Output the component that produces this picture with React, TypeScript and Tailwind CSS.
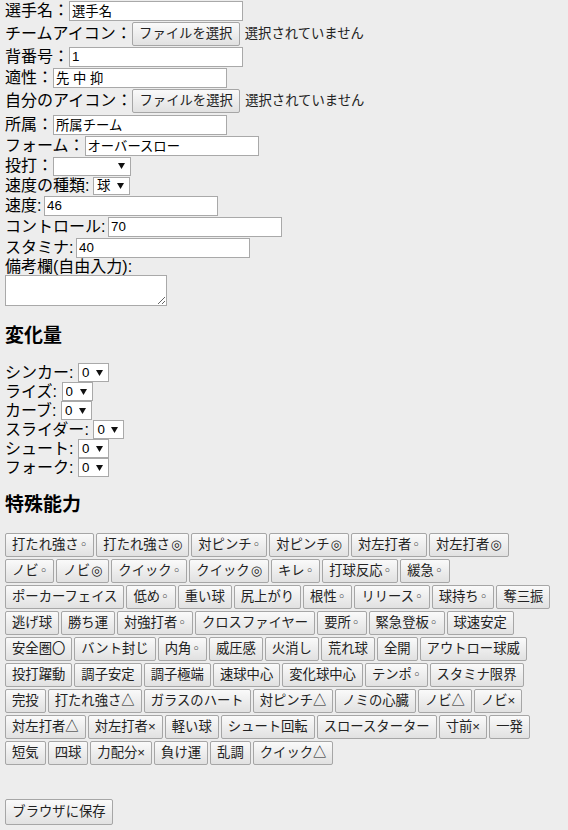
const rows: string[][] = [
  ["打たれ強さ◦", "打たれ強さ◎", "対ピンチ◦", "対ピンチ◎", "対左打者◦", "対左打者◎"],
  ["ノビ◦", "ノビ◎", "クイック◦", "クイック◎", "キレ◦", "打球反応◦", "緩急◦"],
  ["ポーカーフェイス", "低め◦", "重い球", "尻上がり", "根性◦", "リリース◦", "球持ち◦", "奪三振"],
  ["逃げ球", "勝ち運", "対強打者◦", "クロスファイヤー", "要所◦", "緊急登板◦", "球速安定"],
  ["安全圏〇", "バント封じ", "内角◦", "威圧感", "火消し", "荒れ球", "全開", "アウトロー球威"],
  ["投打躍動", "調子安定", "調子極端", "速球中心", "変化球中心", "テンポ◦", "スタミナ限界"],
  ["完投", "打たれ強さ△", "ガラスのハート", "対ピンチ△", "ノミの心臓", "ノビ△", "ノビ×"],
  ["対左打者△", "対左打者×", "軽い球", "シュート回転", "スロースターター", "寸前×", "一発"],
  ["短気", "四球", "力配分×", "負け運", "乱調", "クイック△"],
];

const pitches = ["シンカー", "ライズ", "カーブ", "スライダー", "シュート", "フォーク"];

const btn =
  "border border-[#a6a6a6] bg-linear-to-b from-[#fafafa] to-[#e1e1e1] text-[13.33px] text-[#222] rounded-[2px]";

const TextInput = ({ value }: { value: string }) => (
  <input
    defaultValue={value}
    className="h-[20px] w-[174px] border border-[#a9a9a9] bg-white px-[2px] text-[13.33px] text-black outline-none"
  />
);

const FileInput = () => (
  <span className="flex items-center">
    <button className={`h-[24px] w-[108px] ${btn}`}>ファイルを選択</button>
    <span className="ml-[5px] text-[13.33px] text-[#222]">選択されていません</span>
  </span>
);

const Select = ({ value, className }: { value: string; className: string }) => (
  <span className="relative inline-flex">
    <select
      defaultValue={value}
      className={`appearance-none border border-[#a9a9a9] bg-white pl-[3px] text-[13.33px] text-black outline-none ${className}`}
    >
      <option value={value}>{value}</option>
    </select>
    <svg
      className="pointer-events-none absolute right-[6px] top-1/2 -translate-y-1/2"
      width="7"
      height="6"
      viewBox="0 0 7 6"
    >
      <path d="M0 0h7L3.5 6z" fill="#111" />
    </svg>
  </span>
);

const Colon = ({ className }: { className: string }) => (
  <span className={`inline-block ${className}`}>:</span>
);

// trailing ◦ / ◎ marks look better in DejaVu than the CJK font
const Label = ({ text }: { text: string }) => {
  const last = text.slice(-1);
  if (last === "◦" || last === "◎") {
    return (
      <>
        {text.slice(0, -1)}
        <span className="ml-[1px] font-['DejaVu_Sans'] text-[13px]">{last}</span>
      </>
    );
  }
  return <>{text}</>;
};

export default function App() {
  return (
    <div className="min-h-[830px] bg-[#ededed] pl-[5px] font-['Liberation_Sans','Noto_Sans_CJK_JP',sans-serif] text-[16px] leading-none text-black">
      <div className="flex h-[21px] items-center">選手名：<TextInput value="選手名" /></div>
      <div className="flex h-[25px] items-center">チームアイコン：<FileInput /></div>
      <div className="flex h-[21px] items-center">背番号：<TextInput value="1" /></div>
      <div className="flex h-[21px] items-center">適性：<TextInput value="先 中 抑" /></div>
      <div className="flex h-[26px] items-center">自分のアイコン：<FileInput /></div>
      <div className="flex h-[21px] items-center">所属：<TextInput value="所属チーム" /></div>
      <div className="flex h-[21px] items-center">フォーム：<TextInput value="オーバースロー" /></div>
      <div className="flex h-[20px] items-center">
        投打：<Select value="" className="h-[19px] w-[78px]" />
      </div>
      <div className="flex h-[19px] items-center">
        速度の種類<Colon className="w-[8px]" />
        <Select value="球" className="h-[18px] w-[37px]" />
      </div>
      <div className="flex h-[21px] items-center">
        速度<Colon className="w-[7px]" />
        <TextInput value="46" />
      </div>
      <div className="flex h-[21px] items-center">
        コントロール<Colon className="w-[7px]" />
        <TextInput value="70" />
      </div>
      <div className="flex h-[21px] items-center">
        スタミナ<Colon className="w-[7px]" />
        <TextInput value="40" />
      </div>
      <div className="flex h-[17px] items-center">備考欄(自由入力):</div>
      <textarea className="block h-[31px] w-[162px] border border-[#a9a9a9] bg-white text-[13.33px] outline-none" />

      <h3 className="mt-[19px] h-[22px] text-[19px] font-bold leading-[22px]">変化量</h3>
      <div className="mt-[16px]">
        {pitches.map((p) => (
          <div key={p} className="flex h-[19px] items-center">
            {p}
            <Colon className="w-[9px]" />
            <Select value="0" className="h-[19px] w-[31px]" />
          </div>
        ))}
      </div>

      <h3 className="mt-[17px] h-[22px] text-[19px] font-bold leading-[22px]">特殊能力</h3>
      <div className="mt-[17px] flex flex-col gap-[2px]">
        {rows.map((row, i) => (
          <div key={i} className="flex gap-[2px]">
            {row.map((b) => (
              <button key={b} className={`h-[24px] px-[6px] ${btn}`}>
                <Label text={b} />
              </button>
            ))}
          </div>
        ))}
      </div>

      <button className={`mt-[34px] h-[26px] w-[108px] ${btn}`}>ブラウザに保存</button>
    </div>
  );
}
